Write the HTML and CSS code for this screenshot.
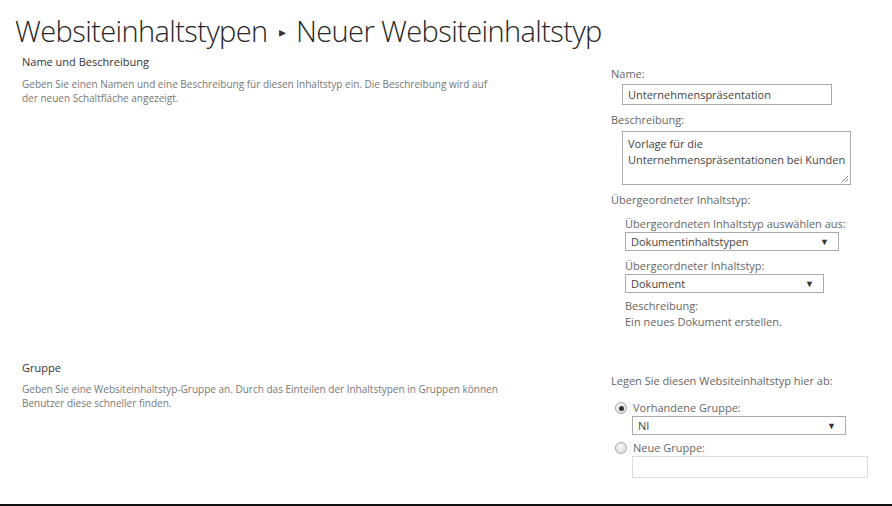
FILE: index.html
```html
<!DOCTYPE html>
<html lang="de">
<head>
<meta charset="utf-8">
<title>Neuer Websiteinhaltstyp</title>
<link rel="stylesheet" href="styles.css">
</head>
<body>
<div class="page">
  <h1 class="title">Websiteinhaltstypen <span class="sep">&#9656;</span> Neuer Websiteinhaltstyp</h1>

  <div class="section s1">
    <div class="left">
      <div class="sec-head">Name und Beschreibung</div>
      <div class="sec-desc">Geben Sie einen Namen und eine Beschreibung für diesen Inhaltstyp ein. Die Beschreibung wird auf der neuen Schaltfläche angezeigt.</div>
    </div>
    <div class="right">
      <div class="lbl l-name">Name:</div>
      <div class="input name-input">Unternehmenspräsentation</div>
      <div class="lbl l-desc">Beschreibung:</div>
      <div class="textarea">Vorlage für die<br>Unternehmenspräsentationen bei Kunden
        <svg class="grip" width="8" height="8" viewBox="0 0 8 8"><path d="M7 1 L1 7 M7 4 L4 7" stroke="#888" stroke-width="1"/></svg>
      </div>
      <div class="lbl l-parent">Übergeordneter Inhaltstyp:</div>
      <div class="sub">
        <div class="lbl sub-lbl">Übergeordneten Inhaltstyp auswählen aus:</div>
        <div class="select sel1"><span>Dokumentinhaltstypen</span><span class="arrow">&#9660;</span></div>
        <div class="lbl sub-lbl2">Übergeordneter Inhaltstyp:</div>
        <div class="select sel2"><span>Dokument</span><span class="arrow">&#9660;</span></div>
        <div class="lbl sub-lbl3">Beschreibung:</div>
        <div class="lbl">Ein neues Dokument erstellen.</div>
      </div>
    </div>
  </div>

  <div class="section s2">
    <div class="left">
      <div class="sec-head">Gruppe</div>
      <div class="sec-desc">Geben Sie eine Websiteinhaltstyp-Gruppe an. Durch das Einteilen der Inhaltstypen in Gruppen können Benutzer diese schneller finden.</div>
    </div>
    <div class="right">
      <div class="lbl l-where">Legen Sie diesen Websiteinhaltstyp hier ab:</div>
      <div class="radio-row r1"><span class="radio checked"></span><span class="lbl">Vorhandene Gruppe:</span></div>
      <div class="select sel3"><span>NI</span><span class="arrow">&#9660;</span></div>
      <div class="radio-row r2"><span class="radio"></span><span class="lbl">Neue Gruppe:</span></div>
      <div class="input new-group"></div>
    </div>
  </div>
</div>
</body>
</html>
```
FILE: styles.css
```css
html, body {
  margin: 0;
  padding: 0;
  background: #ffffff;
}
body {
  width: 892px;
  height: 506px;
  overflow: hidden;
  font-family: "Open Sans", "Noto Sans", sans-serif;
  color: #444;
}
.page {
  height: 504px;
  border-bottom: 2px solid #111;
}
.title {
  margin: 0;
  padding: 11px 0 0 15px;
  height: 43px;
  box-sizing: border-box;
  font-weight: 300;
  font-size: 29px;
  line-height: 40px;
  color: #262626;
  letter-spacing: -0.6px;
  white-space: nowrap;
}
.sep {
  font-size: 14px;
  vertical-align: 5px;
  color: #333;
  margin: 0 4px;
}
.section {
  display: flex;
}
.left {
  width: 611px;
  padding-left: 22px;
  box-sizing: border-box;
}
.right {
  flex: 1;
}
.sec-head {
  font-size: 11px;
  line-height: 16px;
  color: #333;
  margin-top: 11px;
}
.sec-desc {
  font-size: 10px;
  line-height: 14px;
  color: #777;
  margin-top: 7px;
  width: 470px;
}
.s2 .sec-desc { width: 480px; }
.lbl {
  font-size: 11px;
  line-height: 16px;
  color: #666;
  white-space: nowrap;
}
.l-name { margin-top: 23px; }
.input {
  box-sizing: border-box;
  border: 1px solid #ababab;
  background: #fff;
  font-size: 11px;
  color: #444;
  line-height: 19px;
  padding-left: 5px;
}
.name-input {
  margin: 2px 0 0 11px;
  width: 210px;
  height: 21px;
}
.l-desc { margin-top: 7px; }
.textarea {
  position: relative;
  box-sizing: border-box;
  margin: 3px 0 0 11px;
  width: 229px;
  height: 54px;
  border: 1px solid #ababab;
  font-size: 11px;
  line-height: 16px;
  color: #444;
  padding: 4px 5px;
  white-space: nowrap;
}
.grip {
  position: absolute;
  right: 1px;
  bottom: 1px;
}
.l-parent { margin-top: 7px; }
.sub {
  margin-left: 14px;
}
.sub-lbl { margin-top: 8px; }
.sub-lbl2 { margin-top: 7px; }
.sub-lbl3 { margin-top: 5px; }
.select {
  box-sizing: border-box;
  display: flex;
  justify-content: space-between;
  align-items: center;
  border: 1px solid #ababab;
  height: 19px;
  padding: 0 9px 0 5px;
  font-size: 11px;
  color: #444;
  background: #fff;
}
.arrow {
  font-size: 9px;
  color: #333;
}
.sel1 { width: 214px; }
.sel2 { width: 199px; }
.s2 { margin-top: 30px; }
.s2 .sec-head { margin-top: 0; }
.s2 .sec-desc { margin-top: 6px; }
.l-where { margin-top: 13px; }
.radio-row {
  display: flex;
  align-items: center;
  margin-left: 4px;
  gap: 6px;
}
.r1 { margin-top: 11px; }
.r2 { margin-top: 5px; }
.radio {
  box-sizing: border-box;
  width: 12px;
  height: 12px;
  border-radius: 50%;
  border: 1px solid #a8a8a8;
  background: radial-gradient(circle at 40% 35%, #f6f6f6, #d8d8d8);
  position: relative;
}
.radio.checked::after {
  content: "";
  position: absolute;
  left: 2.5px;
  top: 2.5px;
  width: 5px;
  height: 5px;
  border-radius: 50%;
  background: #333;
}
.sel3 {
  margin: 0 0 0 21px;
  width: 214px;
  height: 19px;
}
.new-group {
  margin: 0 0 0 21px;
  width: 236px;
  height: 22px;
  border-color: #dcdcdc;
}
```
